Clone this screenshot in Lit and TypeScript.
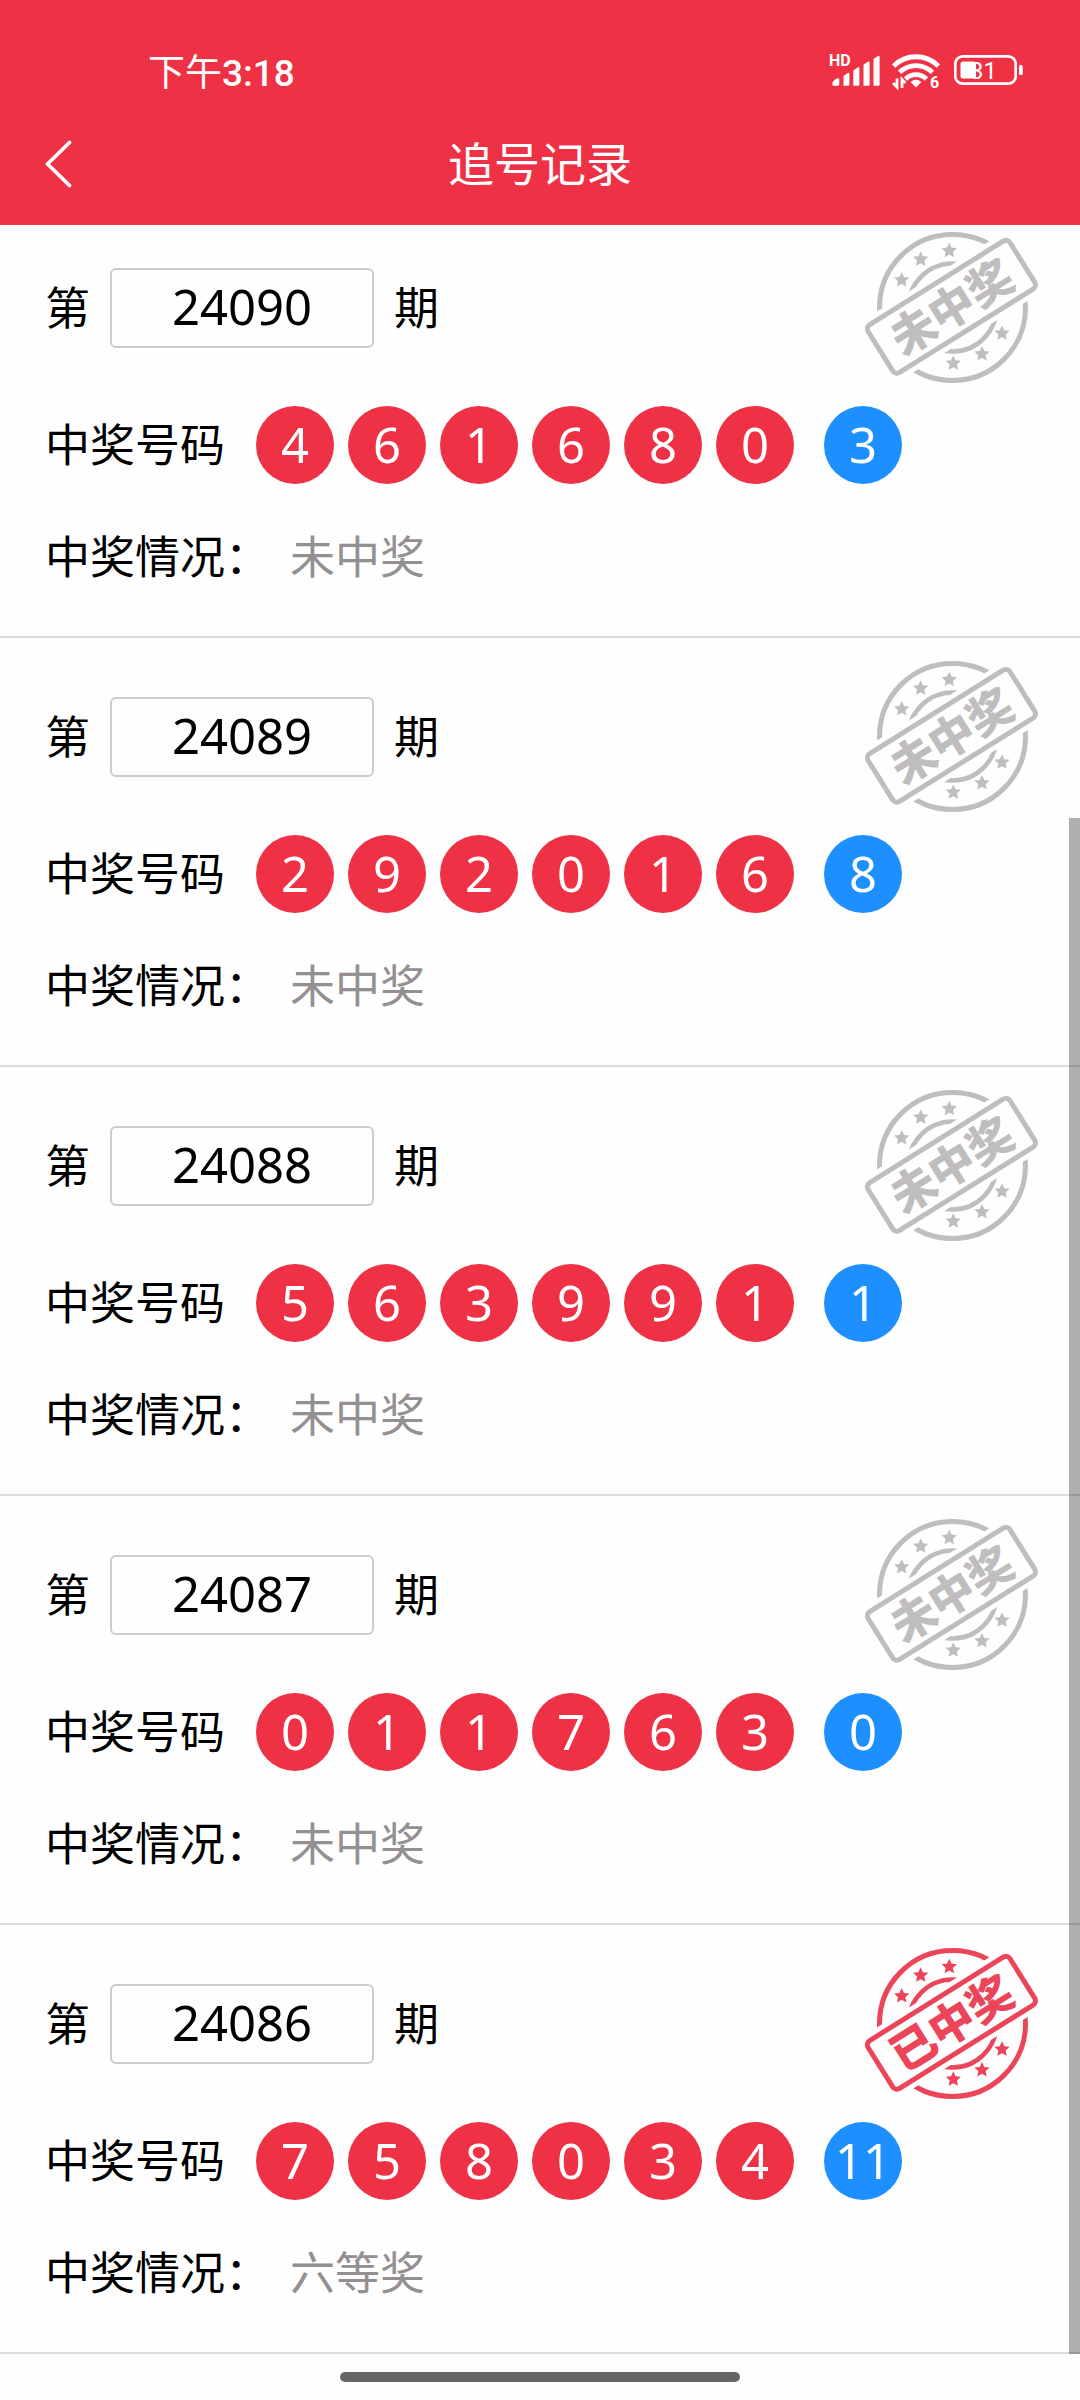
import { LitElement, html, svg, css } from "lit";
import { customElement, property } from "lit/decorators.js";

interface DrawRecord {
  issue: string;
  red: number[];
  blue: number;
  won: boolean;
  result: string;
}

const RECORDS: DrawRecord[] = [
  { issue: "24090", red: [4, 6, 1, 6, 8, 0], blue: 3, won: false, result: "未中奖" },
  { issue: "24089", red: [2, 9, 2, 0, 1, 6], blue: 8, won: false, result: "未中奖" },
  { issue: "24088", red: [5, 6, 3, 9, 9, 1], blue: 1, won: false, result: "未中奖" },
  { issue: "24087", red: [0, 1, 1, 7, 6, 3], blue: 0, won: false, result: "未中奖" },
  { issue: "24086", red: [7, 5, 8, 0, 3, 4], blue: 11, won: true, result: "六等奖" },
];

/** Points of a five-pointed star around a centre. */
function starPoints(cx: number, cy: number, outer: number): string {
  const points: string[] = [];
  for (let i = 0; i < 10; i++) {
    const r = i % 2 === 0 ? outer : outer * 0.48;
    const a = (Math.PI / 5) * i - Math.PI / 2;
    points.push(`${(cx + r * Math.cos(a)).toFixed(2)},${(cy + r * Math.sin(a)).toFixed(2)}`);
  }
  return points.join(" ");
}

const STARS: [number, number][] = [
  [36.7, 48],
  [55.7, 27.3],
  [84.3, 18.7],
  [88.3, 131.3],
  [117, 122],
  [137, 101.3],
];

@customElement("result-stamp")
export class ResultStamp extends LitElement {
  @property({ type: Boolean, reflect: true }) won = false;

  static styles = css`
    :host {
      display: block;
      color: #bfbdbe;
    }
    :host([won]) {
      color: #ec4459;
    }
    .stamp {
      display: block;
      width: 173px;
      height: 151px;
    }
    .ring {
      fill: none;
      stroke: currentColor;
    }
    .gap {
      fill: #fefefe;
    }
    .word {
      fill: currentColor;
      font: 900 45px "Noto Sans CJK SC", sans-serif;
      text-anchor: middle;
    }
  `;

  render() {
    return html`
      <svg class="stamp" viewBox="0 0 173 151">
        <circle class="ring" cx="87.5" cy="75.5" r="73" stroke-width="5" />
        <circle class="ring" cx="87.5" cy="75.5" r="44" stroke-width="4.5" />
        ${STARS.map(([x, y]) => svg`<polygon fill="currentColor" points=${starPoints(x, y, 8)} />`)}
        <g transform="translate(86.4 74.8) rotate(-32)">
          <rect class="gap" x="-90" y="-35.5" width="180" height="71" rx="8" />
          <rect class="ring" x="-83.7" y="-28.2" width="167.4" height="56.4" rx="5" stroke-width="5" />
          <text class="word" x="0" y="17">${this.won ? "已中奖" : "未中奖"}</text>
        </g>
      </svg>
    `;
  }
}

@customElement("draw-record")
export class DrawRecordItem extends LitElement {
  @property({ attribute: false }) record!: DrawRecord;

  static styles = css`
    :host {
      display: block;
      padding: 59px 45px;
      border-bottom: 2px solid #dcdcdc;
    }
    :host(:first-of-type) {
      padding-top: 43px;
    }
    .issue {
      position: relative;
      margin-bottom: 58px;
    }
    .period {
      display: flex;
      align-items: center;
      gap: 20px;
    }
    .label {
      padding-bottom: 6px;
    }
    .number {
      box-sizing: border-box;
      width: 264px;
      height: 80px;
      padding: 0 0 4px;
      border: 2px solid #cccccc;
      border-radius: 6px;
      background: none;
      color: inherit;
      text-align: center;
      font: 49px "Noto Sans", sans-serif;
      outline: none;
    }
    .badge {
      position: absolute;
      top: -36px;
      right: -3px;
    }
    .draw {
      display: flex;
      align-items: center;
      gap: 31px;
      margin-bottom: 48px;
    }
    .balls {
      display: flex;
      gap: 14px;
      margin: 0;
      padding: 0;
      list-style: none;
    }
    .ball {
      width: 78px;
      height: 78px;
      border-radius: 50%;
      background: #ee3144;
      color: #fff;
      font: 49px/76px "Noto Sans", sans-serif;
      text-align: center;
    }
    .blue {
      margin-left: 16px;
      background: #1e8fff;
    }
    .outcome {
      display: flex;
      gap: 20px;
    }
    .result {
      color: #948f91;
    }
  `;

  render() {
    const { issue, red, blue, won, result } = this.record;
    return html`
      <div class="issue">
        <label class="period">
          <span class="label">第</span>
          <input class="number" type="text" readonly .value=${issue} />
          <span class="label">期</span>
        </label>
        <result-stamp class="badge" ?won=${won}></result-stamp>
      </div>
      <div class="draw">
        <span class="label">中奖号码</span>
        <ul class="balls">
          ${red.map((n) => html`<li class="ball">${n}</li>`)}
          <li class="ball blue">${blue}</li>
        </ul>
      </div>
      <div class="outcome">
        <span>中奖情况：</span>
        <span class="result">${result}</span>
      </div>
    `;
  }
}

@customElement("app-root")
export class AppRoot extends LitElement {
  static styles = css`
    :host {
      display: flex;
      flex-direction: column;
      min-height: 100vh;
      background: #fefefe;
      color: #000;
      font: 45px/45px "Noto Sans CJK SC", sans-serif;
    }
    .header {
      padding-top: 50px;
      background: #ee3144;
      color: #fff;
    }
    .status {
      display: flex;
      align-items: center;
      justify-content: space-between;
      height: 44px;
      padding: 0 57px 0 148px;
      font: 37px/40px Roboto, "Noto Sans CJK SC", sans-serif;
    }
    .clock {
      padding-top: 4px;
      font-weight: 500;
    }
    .half {
      font-weight: 400;
    }
    .icons {
      display: flex;
    }
    .wifi {
      margin: 0 14px 0 12px;
    }
    .tiny {
      fill: currentColor;
      font: 700 16px/16px Roboto, sans-serif;
    }
    .charge {
      fill: currentColor;
      font: 400 24px/24px Roboto, sans-serif;
    }
    .nav {
      display: grid;
      grid-template-columns: 1fr auto 1fr;
      align-items: center;
      height: 123px;
      padding: 8px 45px 0;
    }
    .back {
      justify-self: start;
      display: block;
      padding: 0;
      border: 0;
      background: none;
      color: inherit;
    }
    .chevron {
      display: block;
    }
    .title {
      margin: 0;
      padding-bottom: 4px;
      font-size: 46px;
      font-weight: 400;
    }
    .list {
      position: relative;
    }
    .thumb {
      position: absolute;
      top: 593px;
      right: 0;
      bottom: 0;
      width: 11px;
      background: rgba(0, 0, 0, 0.31);
    }
    .gesture {
      flex: 1;
      display: flex;
      align-items: center;
      justify-content: center;
      min-height: 44px;
    }
    .handle {
      width: 400px;
      height: 10px;
      border-radius: 5px;
      background: #666;
    }
  `;

  render() {
    return html`
      <header class="header">
        <div class="status">
          <span class="clock"><span class="half">下午</span>3:18</span>
          <div class="icons">
            <svg width="52" height="44" viewBox="0 0 52 44">
              <text class="tiny" x="1" y="16">HD</text>
              <g fill="currentColor">
                <path d="M4.5 35.7V32.5Q7 28.5 10 28.3Q11.3 28.3 11.3 29.5V34.5Q11.3 35.7 10 35.7Z" />
                <path d="M15.5 35.7V26L20 22.8Q21.4 22.3 21.4 24V34.5Q21.4 35.7 20.2 35.7Z" />
                <path d="M25.3 35.7V20.5L30 17.3Q31.4 16.8 31.4 18.5V34.5Q31.4 35.7 30.2 35.7Z" />
                <path d="M35.5 35.7V14.5L40.2 11.5Q41.6 11 41.6 12.7V34.5Q41.6 35.7 40.4 35.7Z" />
                <path d="M45.5 35.7V9L50.2 5.8Q51.6 5.3 51.6 7V34.5Q51.6 35.7 50.4 35.7Z" />
              </g>
            </svg>
            <svg class="wifi" width="48" height="44" viewBox="0 0 48 44">
              <g fill="none" stroke="currentColor" stroke-width="4.8">
                <path d="M1.6 16A31.7 31.7 0 0 1 46.4 16" />
                <path d="M7.6 22.4A23 23 0 0 1 40.4 22.4" />
                <path d="M13.6 29A14.5 14.5 0 0 1 34.4 29" />
              </g>
              <path d="M24 37.5L18.6 32Q24 27 29.4 32Z" fill="currentColor" />
              <path d="M5 28.5V37L1 33M10 38V29.5L13.5 33" fill="none" stroke="currentColor" stroke-width="2.8" />
              <text class="tiny" x="38" y="38">6</text>
            </svg>
            <svg width="69" height="44" viewBox="0 0 69 44">
              <rect x="1.3" y="6.3" width="60.4" height="27.4" rx="7.5" fill="none" stroke="currentColor" stroke-width="2.7" />
              <rect x="6.5" y="11.5" width="15.5" height="17" rx="2.5" fill="currentColor" />
              <rect x="65" y="15" width="3.7" height="10" rx="1.5" fill="currentColor" />
              <text class="charge" x="16" y="29">31</text>
            </svg>
          </div>
        </div>
        <nav class="nav">
          <button class="back" type="button" aria-label="返回">
            <svg class="chevron" width="27" height="48" viewBox="0 0 27 48">
              <path d="M24.5 2.5L2.5 24L24.5 45.5" fill="none" stroke="currentColor" stroke-width="3.8" stroke-linecap="round" stroke-linejoin="round" />
            </svg>
          </button>
          <h1 class="title">追号记录</h1>
        </nav>
      </header>
      <main class="list">
        ${RECORDS.map((record) => html`<draw-record .record=${record}></draw-record>`)}
        <div class="thumb"></div>
      </main>
      <footer class="gesture"><div class="handle"></div></footer>
    `;
  }
}
